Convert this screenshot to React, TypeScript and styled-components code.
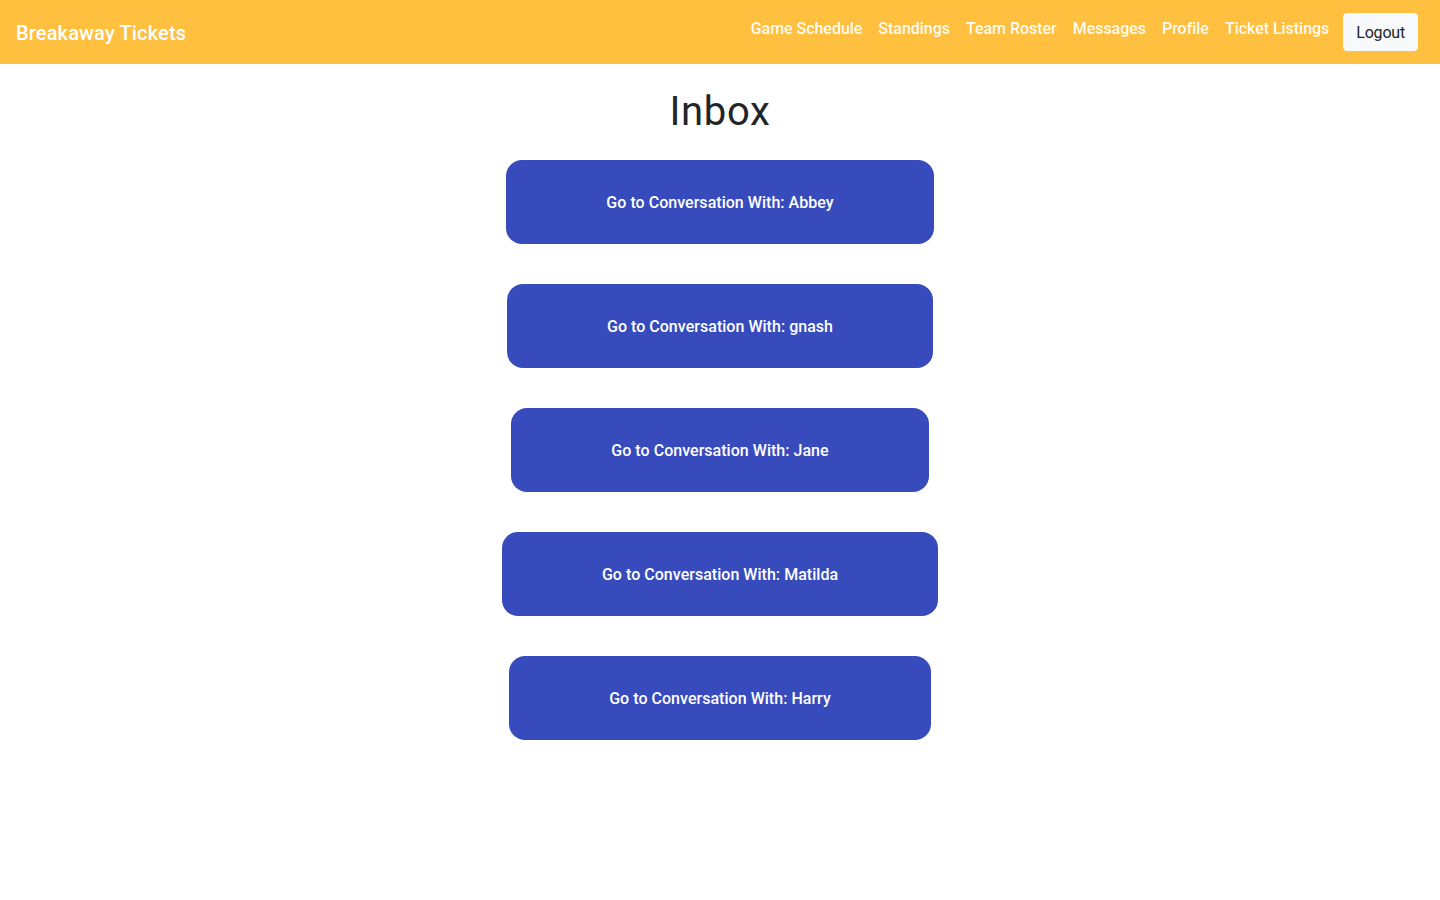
import React from "react";
import styled, { createGlobalStyle } from "styled-components";

const Global = createGlobalStyle`
  * { box-sizing: border-box; }
  body {
    margin: 0;
    font-family: Roboto, "Noto Sans", "Liberation Sans", sans-serif;
    color: #212529;
    background: #fff;
  }
`;

const NavBar = styled.nav`
  height: 64px;
  background: #ffc03f;
  display: flex;
  align-items: center;
  justify-content: space-between;
  padding: 0 22px 0 16px;
`;

const Brand = styled.a`
  color: #fff;
  font-size: 20px;
  font-weight: 500;
  letter-spacing: 0.15px;
  text-decoration: none;
  margin-top: 1px;
`;

const NavList = styled.ul`
  display: flex;
  align-items: center;
  list-style: none;
  margin: 0;
  padding: 0;
`;

const NavLink = styled.a`
  display: block;
  padding: 8px;
  color: rgba(255, 255, 255, 0.95);
  font-size: 16px;
  font-weight: 500;
  letter-spacing: -0.03px;
  text-decoration: none;
  margin-top: -8px;
`;

const LogoutButton = styled.button`
  margin-left: 6px;
  height: 38px;
  padding: 0 12px;
  background: #f8f9fa;
  border: 1px solid #f8f9fa;
  border-radius: 4px;
  color: #212529;
  font-family: inherit;
  font-size: 16px;
  letter-spacing: -0.2px;
`;

const Main = styled.main`
  display: flex;
  flex-direction: column;
  align-items: center;
`;

const Title = styled.h1`
  margin: 24px 0 24px;
  font-size: 40px;
  font-weight: 400;
  line-height: 48px;
  letter-spacing: 0.7px;
`;

const ConvoList = styled.div`
  display: flex;
  flex-direction: column;
  align-items: center;
  gap: 40px;
`;

const ConvoButton = styled.button`
  height: 84px;
  padding: 0 100px;
  background: #384bbd;
  border: none;
  border-radius: 16px;
  color: #fff;
  font-family: inherit;
  font-size: 16px;
  font-weight: 500;
  letter-spacing: 0.03px;
  cursor: pointer;
`;

const links = ["Game Schedule", "Standings", "Team Roster", "Messages", "Profile", "Ticket Listings"];
const people = ["Abbey", "gnash", "Jane", "Matilda", "Harry"];

export default function App() {
  return (
    <>
      <Global />
      <NavBar>
        <Brand href="#">Breakaway Tickets</Brand>
        <NavList>
          {links.map((l) => (
            <li key={l}>
              <NavLink href="#">{l}</NavLink>
            </li>
          ))}
          <li>
            <LogoutButton>Logout</LogoutButton>
          </li>
        </NavList>
      </NavBar>
      <Main>
        <Title>Inbox</Title>
        <ConvoList>
          {people.map((p) => (
            <ConvoButton key={p}>Go to Conversation With: {p}</ConvoButton>
          ))}
        </ConvoList>
      </Main>
    </>
  );
}
